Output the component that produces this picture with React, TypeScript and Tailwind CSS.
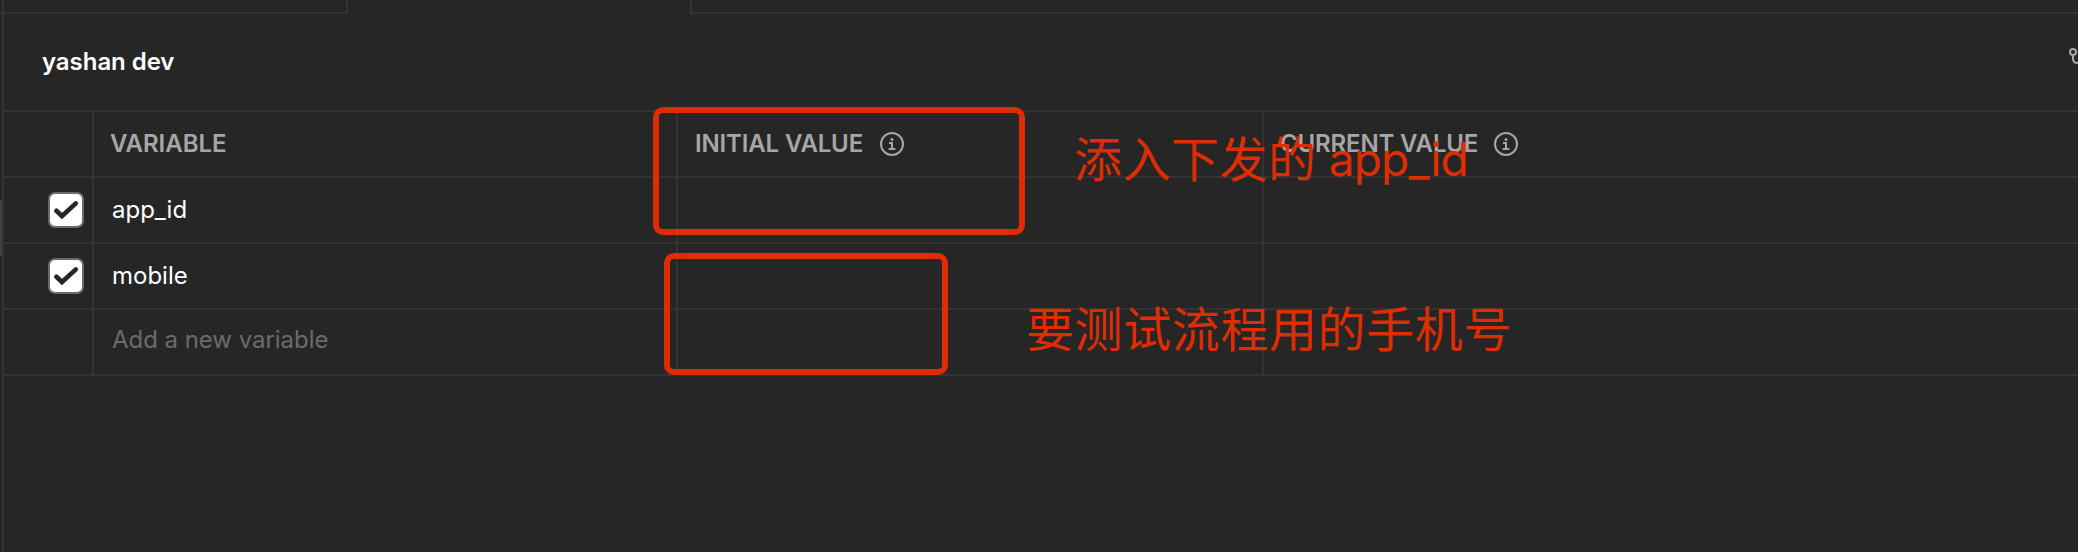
import type { ReactNode } from "react";

function InfoIcon() {
  return (
    <svg width="24" height="24" viewBox="0 0 24 24" fill="none" stroke="#a6a6a6" strokeWidth="2">
      <circle cx="12" cy="12" r="11" />
      <path d="M9 11h3v6M8.6 17h6.8" />
      <circle cx="12" cy="7.4" r="1.5" fill="#a6a6a6" stroke="none" />
    </svg>
  );
}

function Checkbox() {
  return (
    <span className="flex h-9 w-9 items-center justify-center rounded-[7px] border-2 border-[#6b6b6b] bg-white">
      <svg width="32" height="32" viewBox="0 0 32 32" className="shrink-0" fill="none" stroke="#262626" strokeWidth="4.6" strokeLinecap="round" strokeLinejoin="miter">
        <path d="M6.4 16.8l5.6 5.2L25.8 9.4" />
      </svg>
    </span>
  );
}

function Row({ check, children, initial, current }: { check?: boolean; children: ReactNode; initial?: ReactNode; current?: ReactNode }) {
  return (
    <div className="grid h-[66px] grid-cols-[90px_584px_586px_1fr] border-b-2 border-[#333333]">
      <div className="flex items-center border-r-2 border-[#333333] pl-11">{check && <Checkbox />}</div>
      <div className="flex items-center border-r-2 border-[#333333]">{children}</div>
      <div className="flex items-center border-r-2 border-[#333333]">{initial}</div>
      <div className="flex items-center">{current}</div>
    </div>
  );
}

function Heading({ label, spacing }: { label: string; spacing: string }) {
  return (
    <div className={`flex items-center ${spacing}`}>
      <span className="whitespace-nowrap">{label}</span>
      <InfoIcon />
    </div>
  );
}

export default function App() {
  return (
    <div className="relative flex h-[552px] w-[2078px] overflow-hidden bg-[#262626] font-['Inter',sans-serif] text-2xl text-white">
      <div className="w-0.5 shrink-0">
        <div className="h-3" />
        <div className="h-0.5 bg-[#333333]" />
        <div className="h-[186px]" />
        <div className="h-14 bg-[#404040]" />
      </div>
      <div className="min-w-0 flex-1 border-l-2 border-[#333333]">
        <div className="flex h-3.5">
          <div className="w-[344px] border-r-2 border-b-2 border-[#333333]" />
          <div className="w-[342px]" />
          <div className="flex-1 border-b-2 border-l-2 border-[#333333]" />
        </div>
        <div className="flex h-[98px] items-center justify-between border-b-2 border-[#333333] pl-[38px]">
          <h1 className="font-semibold tracking-[-0.05px]">yashan dev</h1>
          <svg width="9" height="30" viewBox="0 0 9 30" fill="none" stroke="#a6a6a6" strokeWidth="2">
            <circle cx="4" cy="5" r="3" />
            <path d="M4 8v4q0 4 5 4" />
          </svg>
        </div>
        <div className="font-semibold tracking-[-0.15px] text-[#a6a6a6]">
          <Row
            initial={<Heading label="INITIAL VALUE" spacing="gap-[17px] pl-[17px]" />}
            current={<Heading label="CURRENT VALUE" spacing="gap-4 pl-4" />}
          >
            <span className="pl-4 tracking-[-0.05px]">VARIABLE</span>
          </Row>
        </div>
        <Row check>
          <span className="pl-[18px]">app_id</span>
        </Row>
        <Row check>
          <span className="pl-[18px]">mobile</span>
        </Row>
        <Row>
          <span className="pb-1 pl-[18px] tracking-[-0.04px] text-[#6b6b6b]">Add a new variable</span>
        </Row>
      </div>

      <div className="absolute top-[107px] left-[653px] h-[128px] w-[372px] rounded-[10px] border-6 border-[#de2c03]" />
      <div className="absolute top-[253px] left-[664px] h-[122px] w-[284px] rounded-[10px] border-6 border-[#de2c03]" />
      <div className="absolute top-[123px] left-[1074px] font-['Inter','Noto_Sans_CJK_SC',sans-serif] text-[48px] leading-[72px] tracking-[0.5px] whitespace-nowrap text-[#de2c03]">
        添入下发的
        <span className="align-[1px] text-[46px] tracking-[-0.8px]"> app_id</span>
      </div>
      <div className="absolute top-[290px] left-[1026px] font-['Noto_Sans_CJK_SC',sans-serif] text-[48px] leading-[72px] tracking-[0.6px] whitespace-nowrap text-[#de2c03]">
        要测试流程用的手机号
      </div>
    </div>
  );
}
